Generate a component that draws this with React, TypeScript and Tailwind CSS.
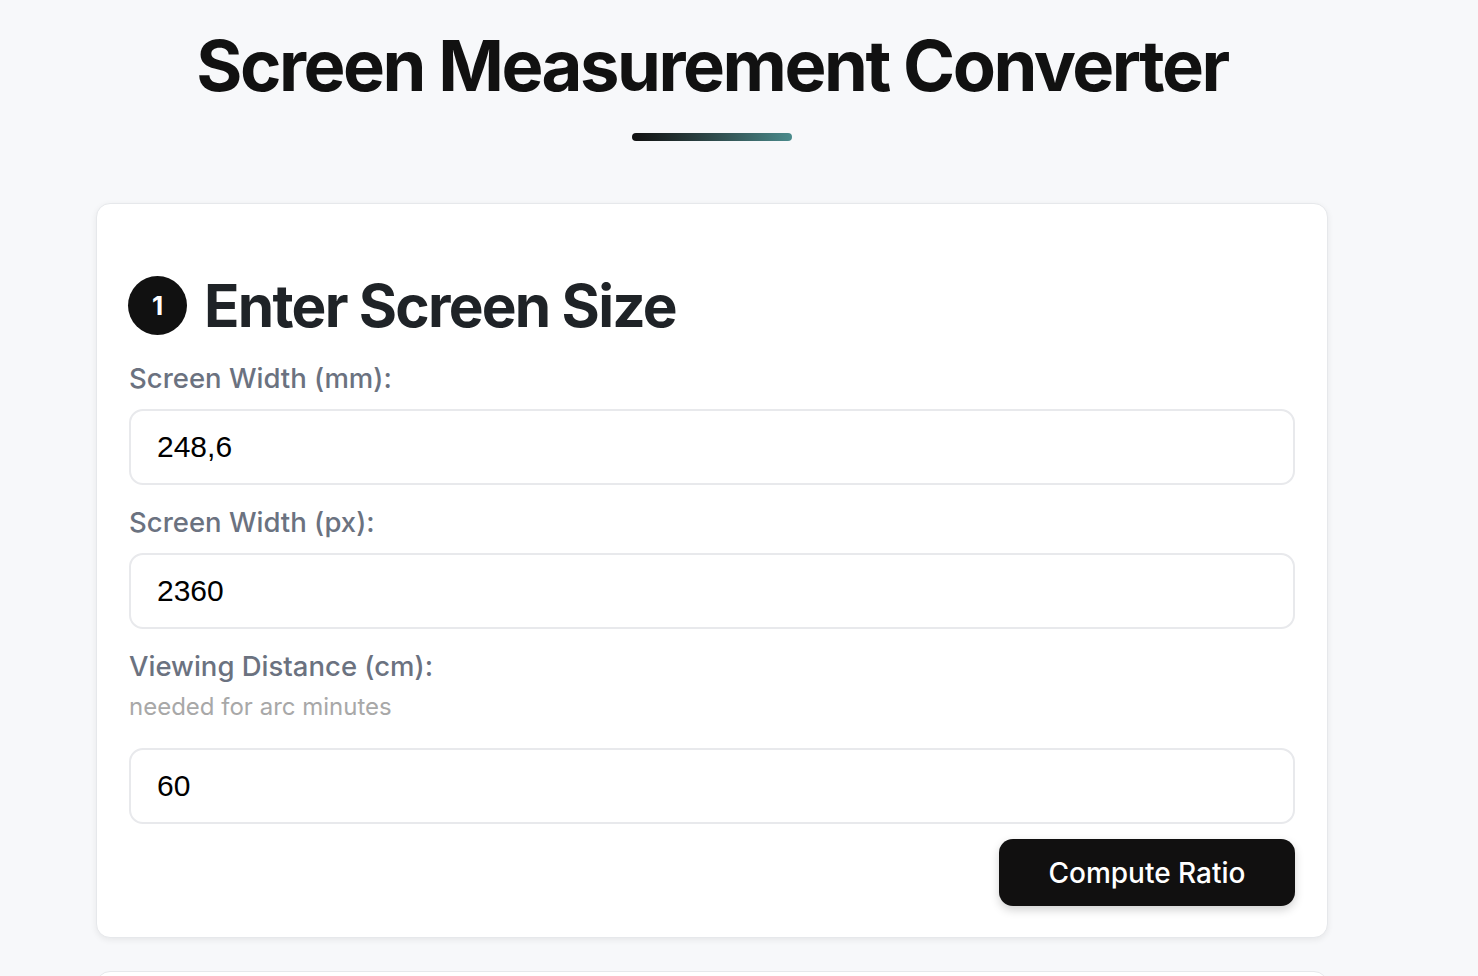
import React from 'react';

const FONT = { fontFamily: 'Inter, "Noto Sans", sans-serif' };

const Field = ({ label, hint, value }: { label: string; hint?: string; value: string }) => (
  <div className="flex flex-col">
    <label className="text-[27.5px] font-medium text-[#6b7280] leading-[34px]">{label}</label>
    {hint && <span className="text-[24px] text-[#a8a8a8] leading-[32px] mt-[8px]">{hint}</span>}
    <input
      defaultValue={value}
      className={`${hint ? 'mt-[25px]' : 'mt-[14px]'} h-[76px] w-full rounded-[14px] border-2 border-[#e8e9ec] bg-white px-[26px] text-[30px] text-black outline-none`}
      style={{ fontFamily: '"Liberation Sans", Arial, sans-serif' }}
    />
  </div>
);

export default function App() {
  return (
    <div className="min-h-screen bg-[#f7f8fa]" style={FONT}>
      <div className="ml-[96px] w-[1232px] pt-[22px]">
        <h1 className="text-center text-[70.5px] font-bold leading-[88px] tracking-[-0.035em] text-[#111111]">
          Screen Measurement Converter
        </h1>
        <div className="mx-auto mt-[23px] h-2 w-[160px] rounded-full bg-gradient-to-r from-[#111111] to-[#4a8b8c]" />

        <div className="mt-[62px] rounded-[14px] border border-[#e6e8eb] bg-white px-[32px] pb-[31px] pt-[70px] shadow-[0_2px_6px_rgba(0,0,0,0.07)]">
          <div className="flex items-center gap-[17px]">
            <span className="-ml-px flex h-[59px] w-[59px] items-center justify-center rounded-full bg-[#111111] text-[26px] font-bold text-white">
              1
            </span>
            <h2 className="text-[58.5px] font-bold leading-[63px] tracking-[-0.03em] text-[#1f2327]">Enter Screen Size</h2>
          </div>

          <div className="mt-[24px] flex flex-col gap-[20px]">
            <Field label="Screen Width (mm):" value="248,6" />
            <Field label="Screen Width (px):" value="2360" />
            <Field label="Viewing Distance (cm):" hint="needed for arc minutes" value="60" />
          </div>

          <div className="mt-[15px] flex justify-end">
            <button className="h-[67px] w-[296px] rounded-[14px] bg-[#111010] text-[28px] font-medium text-white shadow-[0_4px_10px_rgba(0,0,0,0.18)]">
              Compute Ratio
            </button>
          </div>
        </div>

        <div className="mt-[33px] h-[200px] rounded-[14px] border border-[#e6e8eb] bg-white" />
      </div>
    </div>
  );
}
